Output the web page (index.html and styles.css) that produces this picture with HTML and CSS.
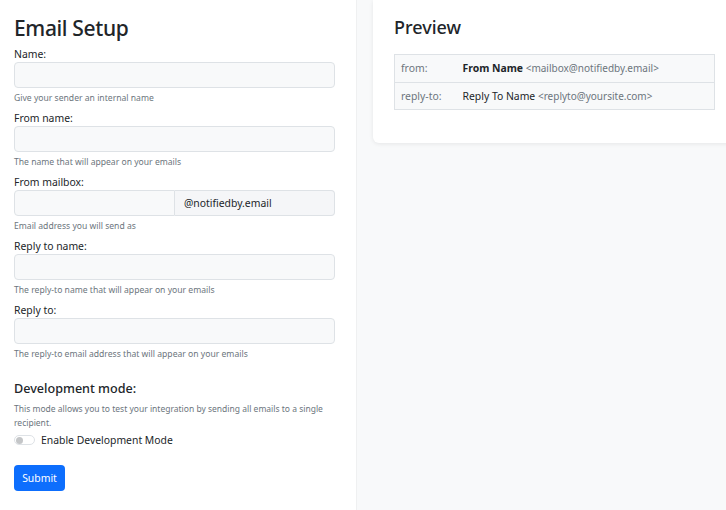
FILE: index.html
```html
<!DOCTYPE html>
<html lang="en">
<head>
<meta charset="utf-8">
<title>Email Setup</title>
<link rel="stylesheet" href="styles.css">
</head>
<body>
<div class="layout">
  <main class="setup">
    <h1 class="title">Email Setup</h1>
    <form class="form">
      <div class="field">
        <label class="label">Name:</label>
        <input class="input" type="text">
        <div class="help">Give your sender an internal name</div>
      </div>
      <div class="field">
        <label class="label">From name:</label>
        <input class="input" type="text">
        <div class="help">The name that will appear on your emails</div>
      </div>
      <div class="field">
        <label class="label">From mailbox:</label>
        <div class="group">
          <input class="input group-input" type="text">
          <span class="addon">@notifiedby.email</span>
        </div>
        <div class="help">Email address you will send as</div>
      </div>
      <div class="field">
        <label class="label">Reply to name:</label>
        <input class="input" type="text">
        <div class="help">The reply-to name that will appear on your emails</div>
      </div>
      <div class="field">
        <label class="label">Reply to:</label>
        <input class="input" type="text">
        <div class="help">The reply-to email address that will appear on your emails</div>
      </div>
      <h2 class="subtitle">Development mode:</h2>
      <p class="desc">This mode allows you to test your integration by sending all emails to a single recipient.</p>
      <div class="switch-row">
        <span class="switch"><span class="knob"></span></span>
        <span class="switch-label">Enable Development Mode</span>
      </div>
      <button class="submit" type="button">Submit</button>
    </form>
  </main>
  <aside class="side">
    <section class="card">
      <h2 class="card-title">Preview</h2>
      <table class="preview">
        <tr>
          <td class="key">from:</td>
          <td class="val"><strong>From Name</strong> <span class="addr">&lt;mailbox@notifiedby.email&gt;</span></td>
        </tr>
        <tr>
          <td class="key">reply-to:</td>
          <td class="val">Reply To Name <span class="addr">&lt;replyto@yoursite.com&gt;</span></td>
        </tr>
      </table>
    </section>
  </aside>
</div>
</body>
</html>
```

FILE: styles.css
```css
* { box-sizing: border-box; }
html, body {
  margin: 0;
  padding: 0;
  height: 100%;
  overflow: hidden;
}
body {
  font-family: "Noto Sans", "Open Sans", sans-serif;
  color: #212529;
  background: #f8f9fa;
}
.layout {
  display: grid;
  grid-template-columns: 357px 1fr;
  height: 100%;
}
.setup {
  background: #fff;
  border-right: 1px solid #eff0f1;
  padding: 15px 21px 0 14px;
}
.title {
  margin: 0 0 6px;
  font-size: 21px;
  line-height: 26px;
  font-weight: 500;
  letter-spacing: -0.35px;
}
.form { display: flex; flex-direction: column; }
.field { margin-bottom: 6px; }
.label {
  display: block;
  font-size: 10.4px;
  line-height: 14px;
  margin-bottom: 1px;
}
.input {
  display: block;
  width: 100%;
  height: 26px;
  border: 1px solid #dee2e6;
  border-radius: 4px;
  background: #f8f9fa;
  font: inherit;
  font-size: 10.4px;
  padding: 0 8px;
}
.group { display: flex; }
.group-input {
  width: 161px;
  flex: none;
  border-radius: 4px 0 0 4px;
}
.addon {
  flex: 1;
  height: 26px;
  border: 1px solid #dee2e6;
  border-left: 0;
  border-radius: 0 4px 4px 0;
  background: #f5f6f8;
  font-size: 10.4px;
  line-height: 24px;
  padding: 0 9px;
}
.help {
  margin-top: 4px;
  font-size: 8.6px;
  line-height: 13px;
  color: #6c757d;
}
.subtitle {
  margin: 14px 0 5px;
  font-size: 12.6px;
  line-height: 16px;
  font-weight: 500;
}
.desc {
  margin: 0 0 3px;
  font-size: 8.5px;
  line-height: 14px;
  color: #6c757d;
}
.switch-row {
  display: flex;
  align-items: center;
  gap: 6px;
  margin-bottom: 18px;
}
.switch {
  width: 21px;
  height: 10px;
  border: 1px solid #dee2e6;
  border-radius: 5px;
  background: #fff;
  display: flex;
  align-items: center;
  padding-left: 1px;
}
.knob {
  width: 7px;
  height: 7px;
  border-radius: 50%;
  background: #c4c6c8;
}
.switch-label { font-size: 10.4px; line-height: 14px; }
.submit {
  align-self: flex-start;
  width: 51px;
  height: 26px;
  border: 0;
  border-radius: 4px;
  background: #0d6efd;
  color: #fff;
  font: inherit;
  font-size: 10.4px;
}
.side { padding-left: 16px; }
.card {
  width: 363px;
  background: #fff;
  border-radius: 0 0 6px 6px;
  box-shadow: 0 1px 4px rgba(0,0,0,0.08);
  padding: 15px 21px 33px;
}
.card-title {
  margin: 0 0 14px;
  font-size: 18px;
  line-height: 25px;
  font-weight: 500;
}
.preview {
  width: 100%;
  border-collapse: collapse;
  background: #f8f9fa;
  font-size: 10.4px;
}
.preview td {
  border-top: 1px solid #dee2e6;
  border-bottom: 1px solid #dee2e6;
  height: 27.5px;
  padding: 0 6px;
}
.preview tr td:first-child { border-left: 1px solid #dee2e6; }
.preview tr td:last-child { border-right: 1px solid #dee2e6; }
.key { width: 62px; color: #6c757d; }
.addr { color: #6c757d; font-size: 10px; }
```
